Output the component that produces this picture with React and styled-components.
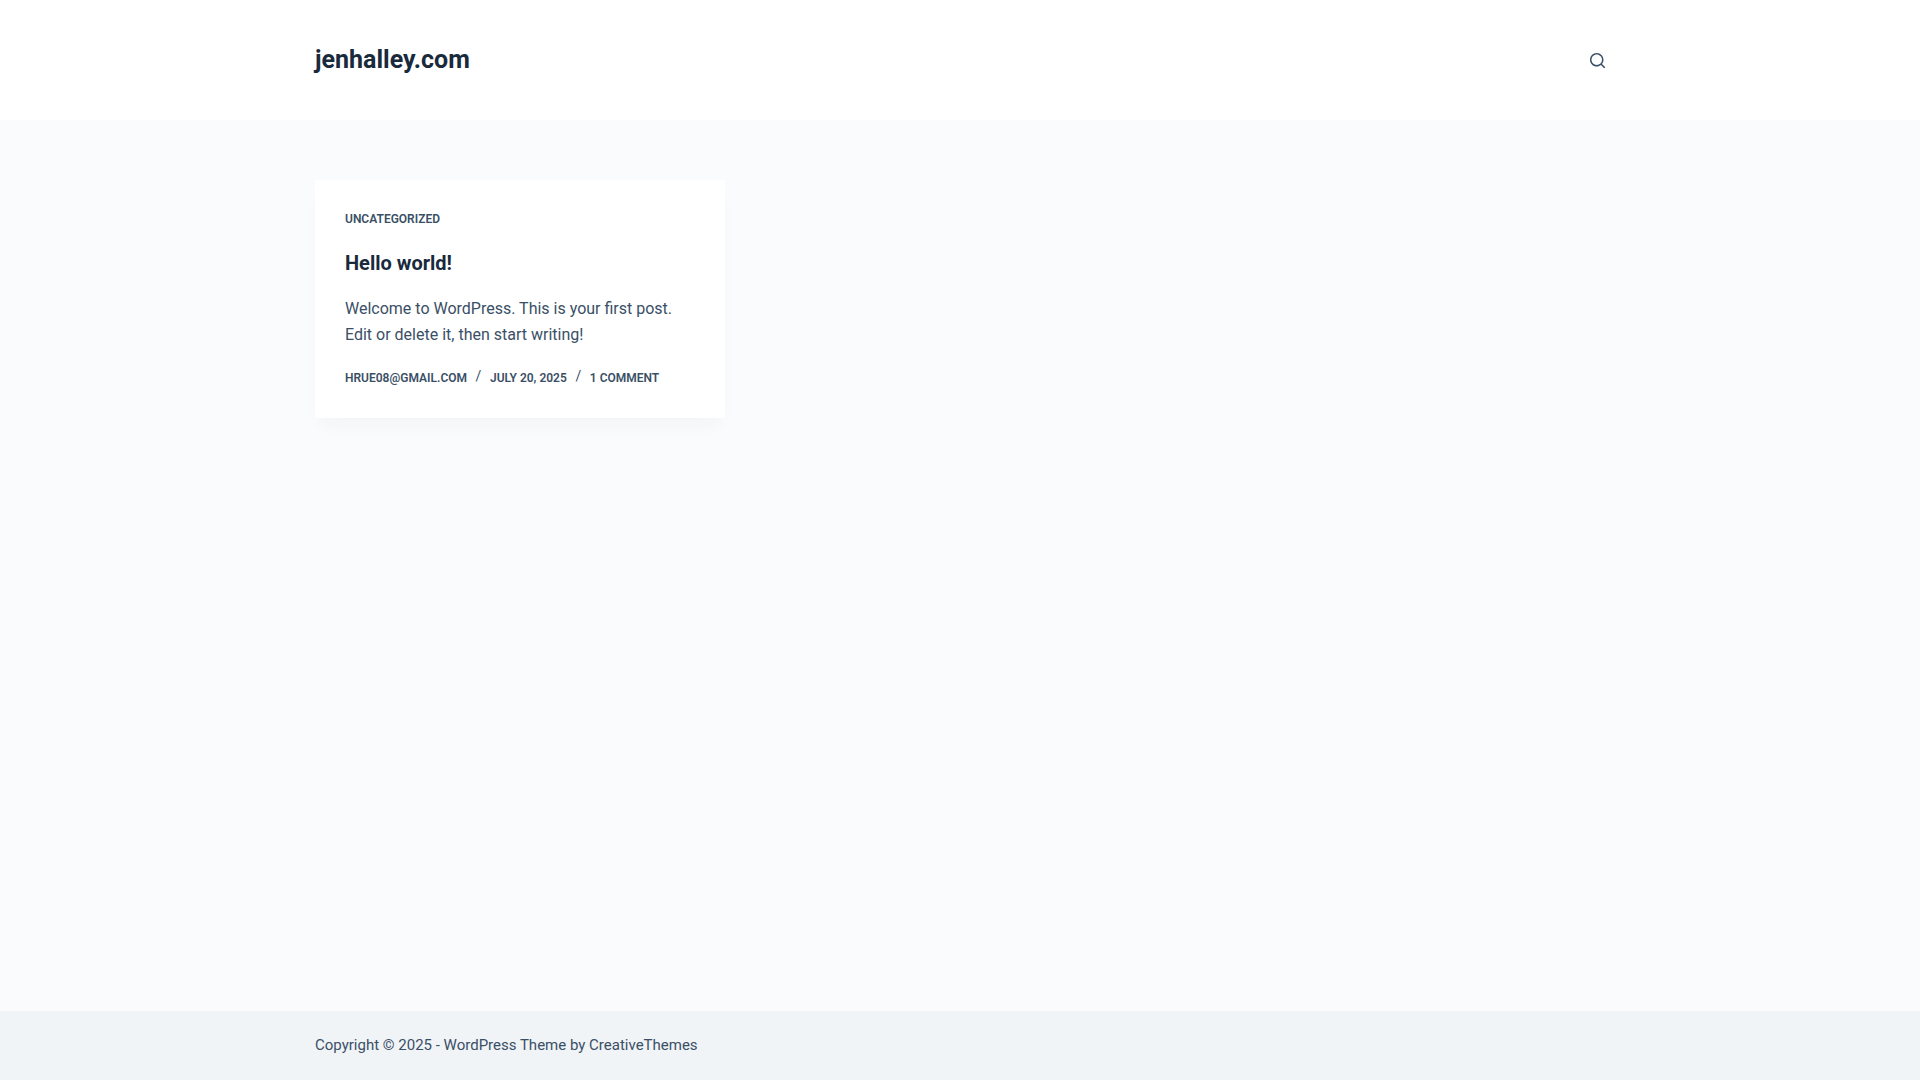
import styled, { createGlobalStyle } from "styled-components";

const GlobalStyle = createGlobalStyle`
  *, *::before, *::after {
    box-sizing: border-box;
  }

  body {
    margin: 0;
    background-color: #fafbfc;
    color: #3a4f66;
    font-family: Roboto, "Liberation Sans", sans-serif;
    font-size: 16px;
    line-height: 26px;
    -webkit-font-smoothing: antialiased;
  }

  a {
    color: inherit;
    text-decoration: none;
  }
`;

const Page = styled.div`
  display: flex;
  flex-direction: column;
  min-height: 100vh;
`;

const Container = styled.div`
  width: 88%;
  max-width: 1290px;
  margin: 0 auto;
`;

const Header = styled.header`
  background-color: #ffffff;
`;

const HeaderRow = styled(Container)`
  display: flex;
  align-items: center;
  justify-content: space-between;
  min-height: 120px;
`;

const SiteTitle = styled.a`
  color: #192a3d;
  font-size: 25px;
  font-weight: 700;
  line-height: 38px;
`;

const SearchButton = styled.button`
  display: flex;
  padding: 0;
  border: 0;
  background: none;
  color: #3a4f66;
  cursor: pointer;

  svg {
    width: 15px;
    height: 15px;
    fill: currentColor;
  }
`;

const Main = styled.main`
  flex: 1;
  padding: 60px 0;
`;

const Entries = styled(Container)`
  display: grid;
  grid-template-columns: repeat(3, minmax(0, 1fr));
  gap: 30px;

  @media (max-width: 1000px) {
    grid-template-columns: repeat(2, minmax(0, 1fr));
  }

  @media (max-width: 690px) {
    grid-template-columns: minmax(0, 1fr);
  }
`;

const Card = styled.article`
  display: flex;
  flex-direction: column;
  gap: 20px;
  padding: 30px;
  background-color: #ffffff;
  box-shadow: 0 12px 18px -6px rgba(34, 56, 101, 0.04);
`;

const Meta = styled.ul`
  display: flex;
  flex-wrap: wrap;
  min-height: 20px;
  margin: 0;
  padding: 0;
  list-style: none;
  font-size: 12px;
  font-weight: 600;
  line-height: ${({ $category }) => ($category ? "18px" : "20px")};
  text-transform: uppercase;

  li {
    display: flex;
  }

  li + li::before {
    content: "/";
    width: 7px;
    margin: 0 8px;
    font-size: 14px;
    font-weight: 400;
    line-height: 16px;
    text-align: center;
  }
`;

const EntryTitle = styled.h2`
  margin: 0;
  color: #192a3d;
  font-size: 20px;
  font-weight: 700;
  line-height: 26px;
`;

const Excerpt = styled.p`
  margin: 0;
`;

const Footer = styled.footer`
  padding: 22px 0;
  background-color: #f0f4f7;
  font-size: 15px;
  line-height: 25px;
`;

function SearchIcon() {
  return (
    <svg viewBox="0 0 15 15" aria-hidden="true">
      <path d="M14.8,13.7L12,11c0.9-1.2,1.5-2.6,1.5-4.2c0-3.7-3-6.8-6.8-6.8S0,3,0,6.8s3,6.8,6.8,6.8c1.6,0,3.1-0.6,4.2-1.5l2.8,2.8c0.1,0.1,0.3,0.2,0.5,0.2s0.4-0.1,0.5-0.2C15.1,14.5,15.1,14,14.8,13.7z M1.5,6.8c0-2.9,2.4-5.2,5.2-5.2S12,3.9,12,6.8S9.6,12,6.8,12S1.5,9.6,1.5,6.8z" />
    </svg>
  );
}

function Entry({ category, title, excerpt, author, date, comments }) {
  return (
    <Card>
      <Meta $category>
        <li><a href="#category">{category}</a></li>
      </Meta>
      <EntryTitle><a href="#post">{title}</a></EntryTitle>
      <Excerpt>{excerpt}</Excerpt>
      <Meta>
        <li><a href="#author">{author}</a></li>
        <li><time>{date}</time></li>
        <li><a href="#comments">{comments}</a></li>
      </Meta>
    </Card>
  );
}

function App() {
  return (
    <Page>
      <GlobalStyle />
      <Header>
        <HeaderRow>
          <SiteTitle href="#home">jenhalley.com</SiteTitle>
          <SearchButton type="button" aria-label="Search">
            <SearchIcon />
          </SearchButton>
        </HeaderRow>
      </Header>
      <Main>
        <Entries>
          <Entry
            category="Uncategorized"
            title="Hello world!"
            excerpt="Welcome to WordPress. This is your first post. Edit or delete it, then start writing!"
            author="hrue08@gmail.com"
            date="July 20, 2025"
            comments="1 Comment"
          />
        </Entries>
      </Main>
      <Footer>
        <Container>
          Copyright © 2025 - WordPress Theme by <a href="#theme">CreativeThemes</a>
        </Container>
      </Footer>
    </Page>
  );
}

export default App;
